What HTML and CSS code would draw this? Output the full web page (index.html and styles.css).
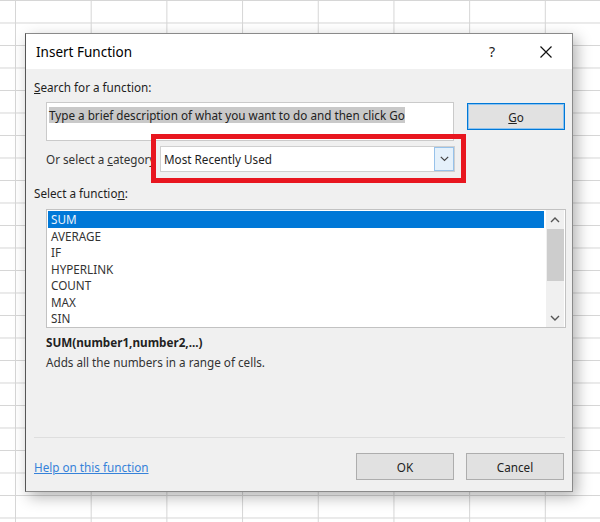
FILE: index.html
```html
<!DOCTYPE html>
<html lang="en">
<head>
    <meta charset="UTF-8">
    <title>Insert Function</title>
    <link rel="stylesheet" href="styles.css">
</head>
<body>
    <div class="dialog">
        <div class="titlebar">
            <span class="title">Insert Function</span>
            <span class="help">?</span>
            <span class="close">
                <svg width="12" height="12" viewBox="0 0 12 12"><path d="M0.5 0.5 L11.5 11.5 M11.5 0.5 L0.5 11.5" stroke="#111" stroke-width="1.2" fill="none"/></svg>
            </span>
        </div>
        <div class="content">
            <div class="label"><u>S</u>earch for a function:</div>
            <div class="search-row">
                <div class="search-box"><span class="selected-text">Type a brief description of what you want to do and then click Go</span></div>
                <button class="btn go"><u>G</u>o</button>
            </div>
            <div class="category-row">
                <span class="category-label">Or select a <u>c</u>ategory</span>
                <div class="select">
                    <span>Most Recently Used</span>
                    <span class="drop">
                        <svg width="9" height="6" viewBox="0 0 9 6"><path d="M0.8 0.8 L4.5 4.5 L8.2 0.8" stroke="#444" stroke-width="1.2" fill="none"/></svg>
                    </span>
                    <div class="callout"></div>
                </div>
            </div>
            <div class="label second">Select a functio<u>n</u>:</div>
            <div class="listbox">
                <ul class="items">
                    <li class="active">SUM</li>
                    <li>AVERAGE</li>
                    <li>IF</li>
                    <li>HYPERLINK</li>
                    <li>COUNT</li>
                    <li>MAX</li>
                    <li>SIN</li>
                </ul>
                <div class="scrollbar">
                    <svg class="arrow" width="10" height="6" viewBox="0 0 10 6"><path d="M1 5 L5 1 L9 5" stroke="#555" stroke-width="1.4" fill="none"/></svg>
                    <div class="thumb"></div>
                    <div class="track"></div>
                    <svg class="arrow" width="10" height="6" viewBox="0 0 10 6"><path d="M1 1 L5 5 L9 1" stroke="#555" stroke-width="1.4" fill="none"/></svg>
                </div>
            </div>
            <div class="syntax">SUM(number1,number2,...)</div>
            <div class="desc">Adds all the numbers in a range of cells.</div>
            <div class="separator"></div>
            <div class="footer">
                <a class="help-link" href="#">Help on this function</a>
                <div class="buttons">
                    <button class="btn">OK</button>
                    <button class="btn">Cancel</button>
                </div>
            </div>
        </div>
    </div>
</body>
</html>
```

FILE: styles.css
```css
body {
    margin: 0;
    width: 600px;
    height: 522px;
    padding: 33px 0 0 25px;
    box-sizing: border-box;
    font-family: "Noto Sans", "Open Sans", sans-serif;
    font-size: 11.7px;
    color: #1e1e1e;
    background-color: #fff;
    background-image:
        linear-gradient(to right, #d6d6d6 1px, transparent 1px),
        linear-gradient(to bottom, #d6d6d6 1px, transparent 1px);
    background-size: 75.7px 22.5px;
    background-position: 15px 0, 0 0;
    overflow: hidden;
}

.dialog {
    width: 548px;
    height: 459px;
    box-sizing: border-box;
    border: 1px solid #8a8a8a;
    border-left-color: #555;
    background-color: #f0f0f0;
    box-shadow: 4px 5px 14px rgba(0, 0, 0, 0.3);
}

.titlebar {
    height: 35px;
    background-color: #fff;
    display: flex;
    align-items: center;
    padding-left: 10px;
}

.title {
    font-size: 13.5px;
    color: #000;
    flex: 1;
}

.help {
    font-size: 14px;
    color: #222;
    width: 20px;
    text-align: center;
    margin-right: 38px;
}

.close {
    width: 12px;
    height: 12px;
    display: flex;
    margin-right: 20px;
}

.content {
    padding: 0 7px 0 8px;
}

.label {
    line-height: 16px;
    margin-top: 10px;
}

.label.second {
    margin-top: 13px;
}

.search-row {
    display: flex;
    margin-top: 7px;
}

.search-box {
    margin-left: 12px;
    width: 409px;
    height: 39px;
    box-sizing: border-box;
    border: 1px solid #cacaca;
    background-color: #fff;
    padding: 2px 2px;
    line-height: 20px;
    color: #222;
}

.selected-text {
    background-color: #c9c9c9;
}

.btn {
    font-family: inherit;
    font-size: 11.7px;
    color: #222;
    background-color: #e1e1e1;
    border: 1px solid #adadad;
    width: 98px;
    height: 27px;
    padding: 0;
}

.btn.go {
    margin-left: 13px;
    margin-top: 1px;
    border-color: #0078d7;
    box-shadow: inset 0 0 0 1px #8ec3ef;
}

.category-row {
    display: flex;
    align-items: center;
    margin-top: 5px;
}

.category-label {
    margin-left: 12px;
    width: 114px;
    white-space: nowrap;
    overflow: hidden;
    color: #333;
}

.select {
    position: relative;
    width: 295px;
    height: 26px;
    box-sizing: border-box;
    border: 1px solid #cfcfcf;
    background-color: #fff;
    display: flex;
    align-items: center;
    padding-left: 3px;
}

.select span:first-child {
    flex: 1;
}

.drop {
    width: 20px;
    height: 24px;
    box-sizing: border-box;
    border: 1px solid #97c2ea;
    background-color: #e5f1fb;
    display: flex;
    align-items: center;
    justify-content: center;
}

.callout {
    position: absolute;
    left: -10px;
    top: -13px;
    width: 315px;
    height: 49px;
    box-sizing: border-box;
    border: 5px solid #e8161f;
}

.listbox {
    margin: 8px 0 0 12px;
    width: 520px;
    height: 119px;
    box-sizing: border-box;
    border: 1px solid #c2c2c2;
    background-color: #fff;
    display: flex;
    padding: 1px 0 0 1px;
}

.items {
    list-style: none;
    margin: 0;
    padding: 0;
    flex: 1;
    margin-right: 2px;
}

.items li {
    line-height: 16.5px;
    padding-left: 3px;
    color: #333;
}

.items li.active {
    background-color: #0078d7;
    color: #e8f1fb;
}

.scrollbar {
    width: 18px;
    margin-top: -1px;
    margin-right: 1px;
    background-color: #f0f0f0;
    display: flex;
    flex-direction: column;
    align-items: center;
}

.arrow {
    margin: 7px 0 6px;
}

.thumb {
    width: 17px;
    height: 52px;
    background-color: #cdcdcd;
}

.track {
    flex: 1;
}

.syntax {
    font-weight: bold;
    margin: 6px 0 0 12px;
    line-height: 16px;
    color: #222;
}

.desc {
    margin: 4px 0 0 12px;
    line-height: 16px;
    color: #333;
}

.separator {
    height: 1px;
    background-color: #dedede;
    margin-top: 67px;
}

.footer {
    display: flex;
    align-items: center;
    justify-content: space-between;
    margin-top: 15px;
}

.help-link {
    color: #3682d9;
}

.buttons {
    display: flex;
    gap: 12px;
    margin-right: 1px;
}
```
